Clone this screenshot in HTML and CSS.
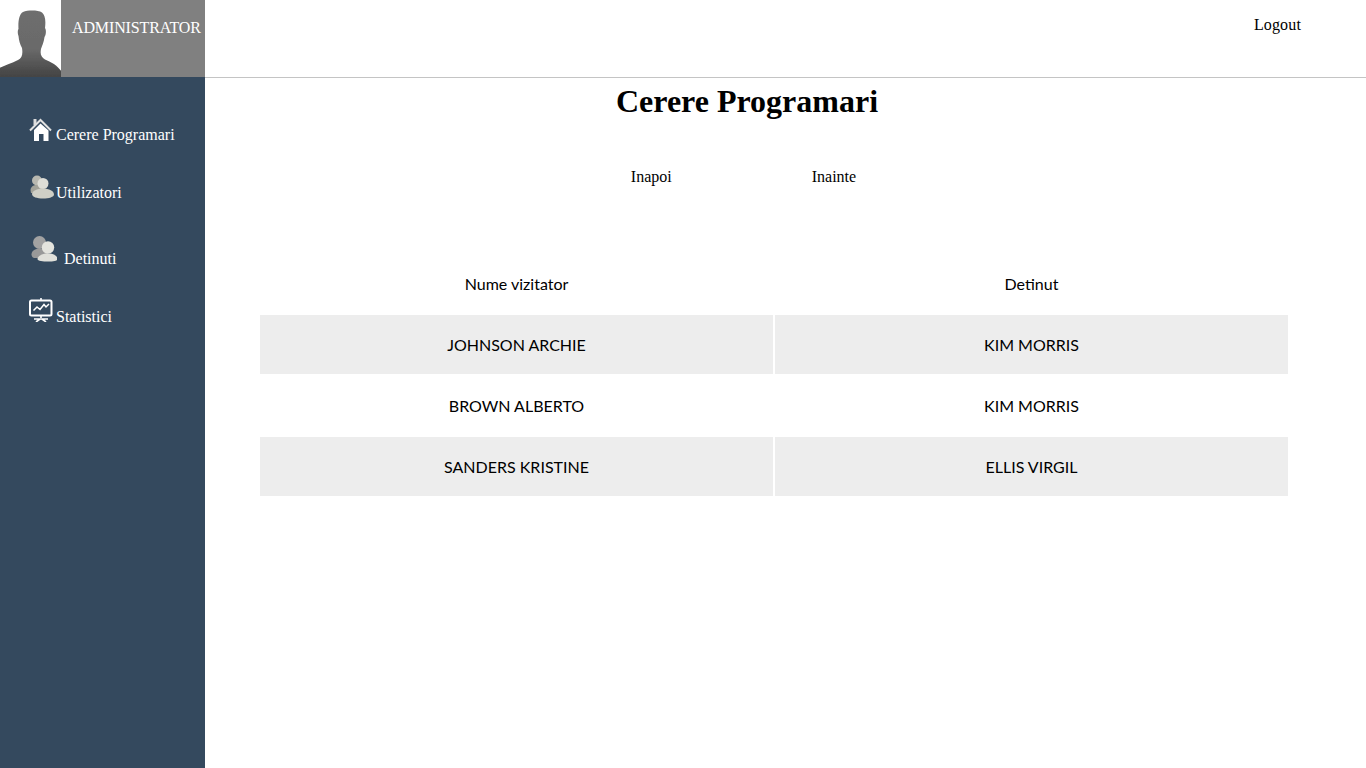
FILE: index.html
```html
<!DOCTYPE html>
<html lang="ro">
<head>
<meta charset="utf-8">
<title>Cerere Programari</title>
<link rel="stylesheet" href="styles.css">
</head>
<body>
<div class="page">
  <aside class="side">
    <div class="profile">
      <svg class="avatar" width="61" height="77" viewBox="0 0 61 77">
        <defs>
          <linearGradient id="av" x1="0" y1="0" x2="0" y2="1">
            <stop offset="0" stop-color="#6e6e6e"/><stop offset="0.55" stop-color="#6a6a6a"/><stop offset="1" stop-color="#3f3f3f"/>
          </linearGradient>
          <filter id="soft" x="-10%" y="-10%" width="120%" height="120%"><feGaussianBlur stdDeviation="0.6"/></filter>
        </defs>
        <rect width="61" height="77" fill="#fff"/>
        <path fill="url(#av)" filter="url(#soft)" d="M-3 69C3 66 12 63 18 60C22 58 23 54 22 48C20 44 19 41 18.500 36C17.500 34 17.500 30 18.500 29C18 22 19 14 23 12C28 10 38 10 42 12.500C45 15 46 20 45 28C46.500 30 46 35 44.500 37C44 42 42 46 41 49C40 54 41 57 45 59.500C51 62 58 65 64 75V80H-3Z"/>
      </svg>
      <div class="role">ADMINISTRATOR</div>
    </div>
    <nav class="menu">
      <a class="item item-home" href="#">
        <svg class="ic" width="23" height="24" viewBox="0 0 23 24"><path fill="#dcdcdc" d="M4.500 1H7.500V7H4.500Z"/><path fill="none" stroke="#e2e2e2" stroke-width="2" d="M1 12.500L11.500 2L22 12.500"/><path fill="#fff" d="M5 12L11.500 5.500L19.500 12.500V23H14.500V16H10V23H5Z"/></svg>
        <span>Cerere Programari</span>
      </a>
      <a class="item item-users" href="#">
        <svg class="ic" width="26" height="24" viewBox="0 0 26 24">
          <g filter="url(#soft)">
            <circle cx="8" cy="5.500" r="5" fill="#b8b8b0"/>
            <path fill="#a3a39a" d="M1.500 15C2 11.500 4 10 8 10S15 11.500 16 15V18H2Z"/>
            <circle cx="14" cy="8.500" r="5.500" fill="#deded7"/>
            <path fill="#cfcfc6" d="M3 19C3 16 8 13.500 14 13.500S25 16 25 19.500C25 22 20 23.500 14 23.500S3 22 3 19Z"/>
          </g>
        </svg>
        <span>Utilizatori</span>
      </a>
      <a class="item item-det" href="#">
        <svg class="ic" width="26" height="26" viewBox="0 0 26 26">
          <g filter="url(#soft)">
            <circle cx="8.500" cy="6.500" r="6.500" fill="#a2a2a2"/>
            <path fill="#999" d="M0.500 18.500C0.500 15 4 12.500 9 12.500S17 15 17 19V22H3C1.500 21.500 0.500 20 0.500 18.500Z"/>
            <circle cx="17" cy="11.500" r="6.200" fill="#e4e4de"/>
            <path fill="#e0e0da" d="M6.500 23C6.500 20 11 17.500 17 17.500S26.500 20 26.500 23C26.500 25 22 25.500 17 25.500S6.500 25 6.500 23Z"/>
          </g>
        </svg>
        <span>Detinuti</span>
      </a>
      <a class="item item-stat" href="#">
        <svg class="ic" width="24" height="24" viewBox="0 0 24 24"><rect x="1" y="2.500" width="21.500" height="15" rx="1.500" fill="none" stroke="#fff" stroke-width="2"/><path fill="none" stroke="#fff" stroke-width="1.500" d="M4.500 12.500L8 9L11 11.500L15 6.500L17 9L20 6"/><path fill="none" stroke="#fff" stroke-width="1.600" d="M12 0V2M12 17V20M5 21H19M11 21L7 24M13 21L17 24"/></svg>
        <span>Statistici</span>
      </a>
    </nav>
  </aside>
  <div class="body">
    <header class="top"><a class="logout" href="#">Logout</a></header>
    <main class="main">
      <h1 class="title">Cerere Programari</h1>
      <div class="pager">
        <a href="#">Inapoi</a>
        <a href="#">Inainte</a>
      </div>
      <table class="list">
        <thead>
          <tr><th>Nume vizitator</th><th>Detinut</th></tr>
        </thead>
        <tbody>
          <tr><td>JOHNSON ARCHIE</td><td>KIM MORRIS</td></tr>
          <tr><td>BROWN ALBERTO</td><td>KIM MORRIS</td></tr>
          <tr><td>SANDERS KRISTINE</td><td>ELLIS VIRGIL</td></tr>
        </tbody>
      </table>
    </main>
  </div>
</div>
</body>
</html>
```
FILE: styles.css
```css
* { box-sizing: border-box; }
html, body { margin: 0; height: 100%; }
body { font-family: "Liberation Serif", "Times New Roman", serif; font-size: 16px; color: #000; background: #fff; overflow: hidden; }
a { color: inherit; text-decoration: none; }
.page { display: flex; height: 768px; }
.side { width: 205px; flex: none; background: #34495e; }
.profile { display: flex; height: 77px; background: #808080; }
.avatar { display: block; flex: none; }
.role { color: #fff; font-size: 16px; line-height: 18px; padding: 19px 0 0 11px; white-space: nowrap; letter-spacing: -0.12px; }
.menu { display: flex; flex-direction: column; padding: 41px 0 0 29px; }
.item { display: flex; align-items: flex-end; color: #fff; font-size: 16px; line-height: 18px; }
.ic { display: block; flex: none; }
.item-home { height: 24px; }
.item-home span { margin-left: 4px; margin-bottom: -2px; }
.item-users { height: 24px; margin-top: 33px; }
.item-users span { margin-left: 1px; margin-bottom: -3px; }
.item-det { height: 26px; margin-top: 37px; padding-left: 2px; }
.item-det span { margin-left: 7px; margin-bottom: -6px; }
.item-stat { height: 24px; margin-top: 36px; }
.item-stat span { margin-left: 3px; margin-bottom: -4px; }
.body { flex: 1; min-width: 0; }
.top { display: flex; justify-content: flex-end; height: 78px; border-bottom: 1px solid #c4c4c4; padding: 16px 65px 0 0; }
.logout { font-size: 16px; line-height: 18px; letter-spacing: 0.15px; }
.main { padding: 0 0 0 53px; }
.title { width: 978px; margin: 5px 0 0; text-align: center; font-size: 32px; line-height: 37px; font-weight: 700; }
.pager { display: flex; width: 978px; justify-content: center; gap: 140px; margin-top: 48px; font-size: 16px; line-height: 18px; padding-right: 7px; }
.list { width: 1032px; margin-top: 66px; border-collapse: separate; border-spacing: 2px; table-layout: fixed; font-family: Lato, sans-serif; font-size: 16px; color: #000; }
.list th { height: 59px; font-weight: 400; text-align: center; padding: 0; }
.list td { height: 59px; text-align: center; padding: 0; }
.list tbody tr:nth-child(odd) td { background: #ededed; }
```
